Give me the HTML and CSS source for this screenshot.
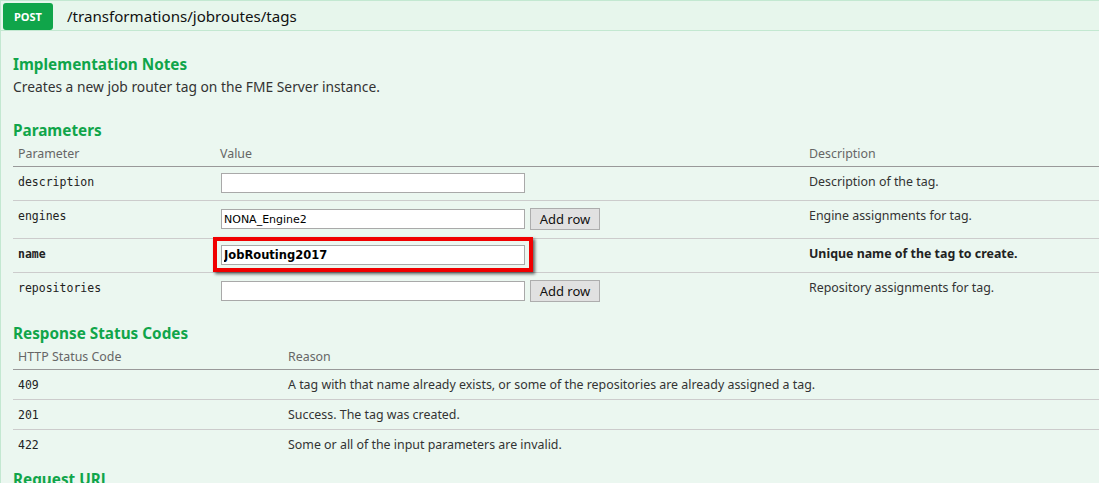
FILE: index.html
```html
<!DOCTYPE html>
<html>
<head>
<meta charset="utf-8">
<link rel="stylesheet" href="styles.css">
</head>
<body>
<div class="op">
  <div class="heading">
    <span class="method">POST</span>
    <span class="path">/transformations/jobroutes/tags</span>
  </div>
  <div class="content">
    <h4 class="h-first">Implementation Notes</h4>
    <p class="notes">Creates a new job router tag on the FME Server instance.</p>

    <h4 class="h-params">Parameters</h4>
    <table class="params">
      <thead>
        <tr><th class="c-param">Parameter</th><th class="c-value">Value</th><th>Description</th></tr>
      </thead>
      <tbody>
        <tr>
          <td class="code">description</td>
          <td><div class="value"><input class="field" type="text" value=""></div></td>
          <td>Description of the tag.</td>
        </tr>
        <tr>
          <td class="code">engines</td>
          <td><div class="value"><input class="field" type="text" value="NONA_Engine2"><button class="add">Add row</button></div></td>
          <td>Engine assignments for tag.</td>
        </tr>
        <tr class="required">
          <td class="code">name</td>
          <td><div class="value"><span class="marked"><input class="field bold" type="text" value="JobRouting2017"></span></div></td>
          <td>Unique name of the tag to create.</td>
        </tr>
        <tr class="last">
          <td class="code">repositories</td>
          <td><div class="value"><input class="field" type="text" value=""><button class="add">Add row</button></div></td>
          <td>Repository assignments for tag.</td>
        </tr>
      </tbody>
    </table>

    <h4 class="h-resp">Response Status Codes</h4>
    <table class="codes">
      <thead>
        <tr><th class="c-code">HTTP Status Code</th><th>Reason</th></tr>
      </thead>
      <tbody>
        <tr><td class="code">409</td><td>A tag with that name already exists, or some of the repositories are already assigned a tag.</td></tr>
        <tr><td class="code">201</td><td>Success. The tag was created.</td></tr>
        <tr class="last"><td class="code">422</td><td>Some or all of the input parameters are invalid.</td></tr>
      </tbody>
    </table>

    <h4 class="h-req">Request URL</h4>
  </div>
</div>
</body>
</html>
```

FILE: styles.css
```css
html, body {
  margin: 0;
  padding: 0;
  background: #ffffff;
  overflow: hidden;
}
body {
  font-family: "Noto Sans", "Open Sans", sans-serif;
  font-size: 12.4px;
  color: #333333;
}
.op {
  width: 1130px;
}
.heading {
  display: flex;
  align-items: center;
  height: 29px;
  background: #e7f6ec;
  border: 1px solid #c3e8d1;
  padding: 0 2px;
}
.method {
  display: inline-flex;
  align-items: center;
  justify-content: center;
  width: 50px;
  height: 27px;
  background: #10a54a;
  color: #ffffff;
  font-size: 11px;
  font-weight: bold;
  border-radius: 3px;
  margin-top: 1px;
}
.path {
  margin-left: 14px;
  font-size: 15.1px;
  color: #111111;
  line-height: 20px;
}
.content {
  background: #ebf7f0;
  border: 1px solid #c3e8d1;
  border-top: none;
  padding: 23px 0 20px 12px;
}
h4 {
  margin: 0;
  font-size: 15.3px;
  line-height: 20px;
  font-weight: bold;
  color: #10a54a;
}
.h-params { margin-top: 24px; }
.h-resp { margin-top: 13px; }
.h-req { margin-top: 10px; }
.notes {
  margin: 4px 0 0;
  font-size: 13.8px;
  line-height: 18px;
}
table {
  border-collapse: collapse;
  width: 1110px;
}
th {
  text-align: left;
  font-weight: normal;
  color: #666666;
  padding: 5px 5px 3px;
  line-height: 18px;
  border-bottom: 1px solid #999999;
}
td {
  vertical-align: top;
  padding: 6px 5px 7px;
  line-height: 18px;
  border-bottom: 1px solid #cccccc;
}
tr.last td { border-bottom: none; }
.codes td { padding: 6px 5px 5px; }
.c-param { width: 192px; }
.c-value { width: 579px; }
.c-code { width: 260px; }
.code {
  font-family: "DejaVu Sans Mono", monospace;
  font-size: 11.5px;
  color: #222222;
}
.required td { font-weight: bold; color: #222222; }
.value {
  display: flex;
  align-items: center;
  gap: 5px;
}
.field {
  box-sizing: border-box;
  width: 304px;
  height: 20px;
  margin: 0 0 0 1px;
  padding: 0 2px;
  border: 1px solid #a9a9a9;
  background: #ffffff;
  font-family: "DejaVu Sans", sans-serif;
  font-size: 11px;
  color: #000000;
}
.field.bold { font-size: 11.5px; font-weight: bold; }
.add {
  box-sizing: border-box;
  width: 70px;
  height: 22px;
  margin: 1px 0;
  padding: 0;
  background: #e1e1e1;
  border: 1px solid #adadad;
  font-family: "Noto Sans", sans-serif;
  font-size: 13px;
  color: #111111;
}
.marked {
  position: relative;
  display: inline-block;
  line-height: 0;
}
.marked::after {
  content: "";
  position: absolute;
  left: -7px;
  top: -8px;
  right: -8px;
  bottom: -7px;
  border: 4px solid #f00000;
  box-shadow: 2px 2px 3px rgba(0, 0, 0, 0.6);
  pointer-events: none;
}
```
